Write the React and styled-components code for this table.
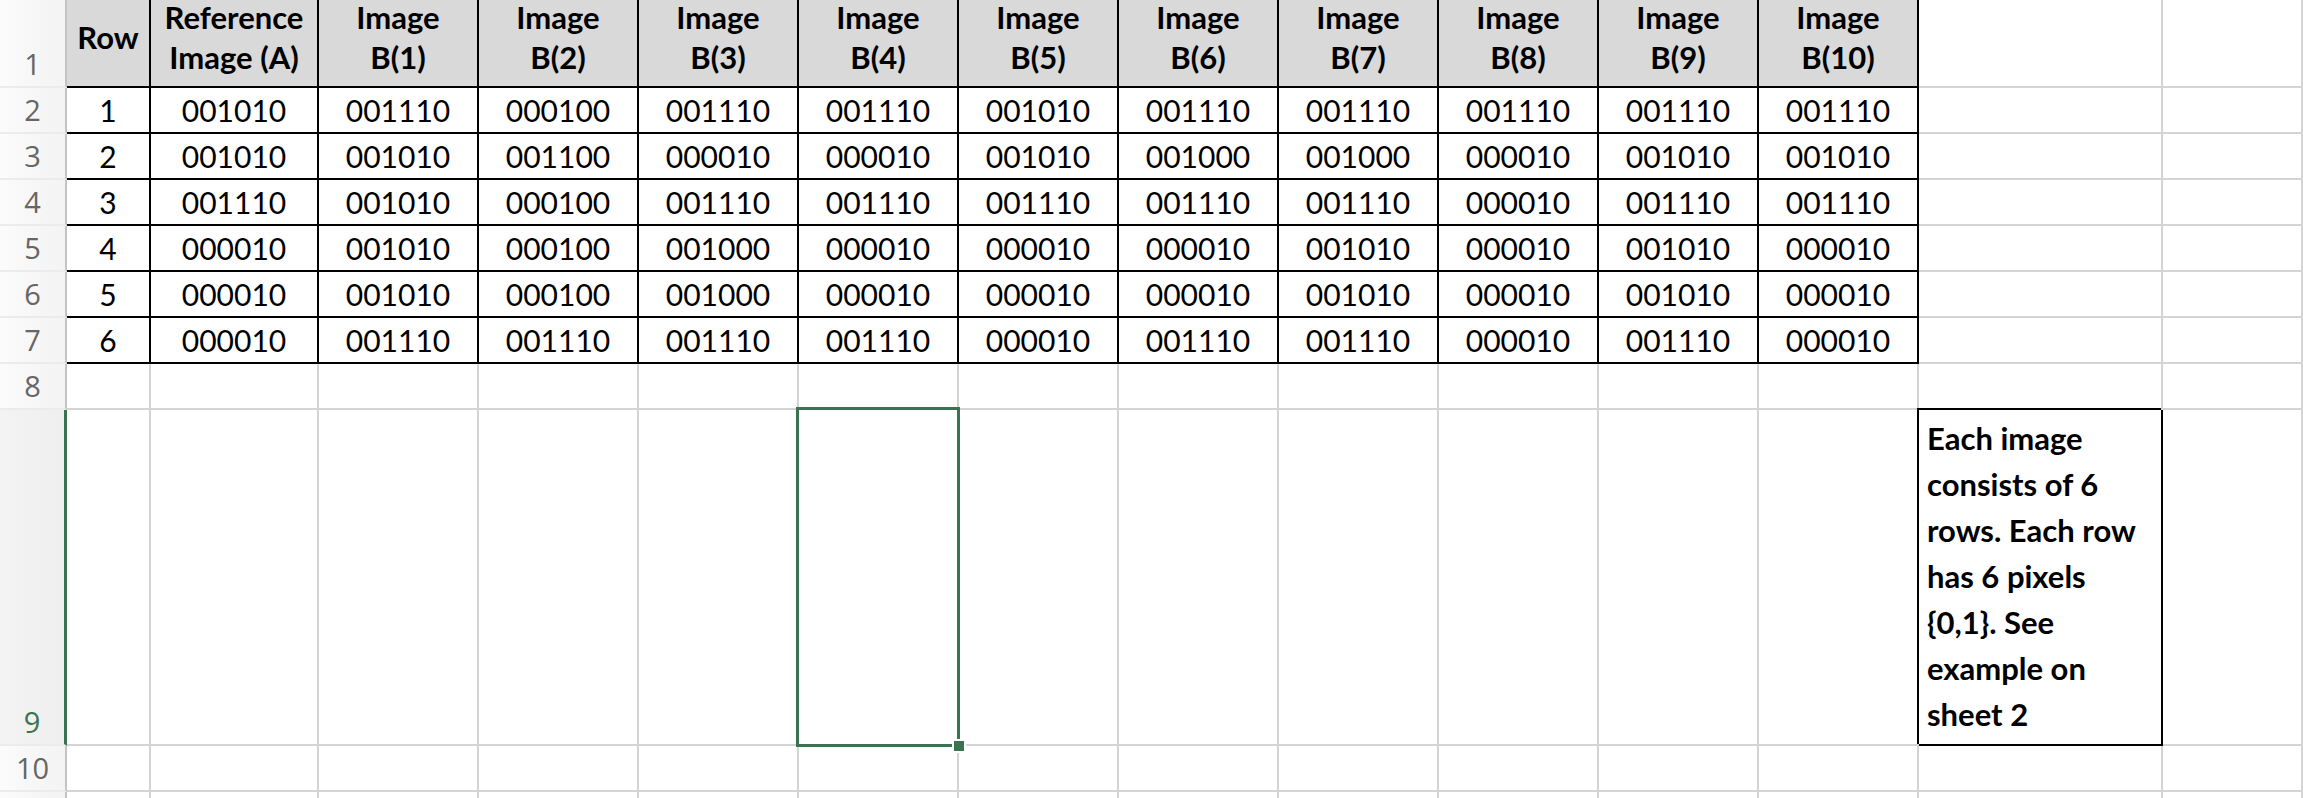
import React from 'react';
import styled, { createGlobalStyle, css } from 'styled-components';

const GlobalStyle = createGlobalStyle`
  html, body {
    margin: 0;
    padding: 0;
    background: #ffffff;
    overflow: hidden;
  }
`;

const GREEN = '#3a7350';
const GRID = '#d4d4d4';

const headers = [
  ['Row'],
  ['Reference', 'Image (A)'],
  ['Image', 'B(1)'],
  ['Image', 'B(2)'],
  ['Image', 'B(3)'],
  ['Image', 'B(4)'],
  ['Image', 'B(5)'],
  ['Image', 'B(6)'],
  ['Image', 'B(7)'],
  ['Image', 'B(8)'],
  ['Image', 'B(9)'],
  ['Image', 'B(10)'],
];

const rows = [
  ['1', '001010', '001110', '000100', '001110', '001110', '001010', '001110', '001110', '001110', '001110', '001110'],
  ['2', '001010', '001010', '001100', '000010', '000010', '001010', '001000', '001000', '000010', '001010', '001010'],
  ['3', '001110', '001010', '000100', '001110', '001110', '001110', '001110', '001110', '000010', '001110', '001110'],
  ['4', '000010', '001010', '000100', '001000', '000010', '000010', '000010', '001010', '000010', '001010', '000010'],
  ['5', '000010', '001010', '000100', '001000', '000010', '000010', '000010', '001010', '000010', '001010', '000010'],
  ['6', '000010', '001110', '001110', '001110', '001110', '000010', '001110', '001110', '000010', '001110', '000010'],
];

// wrapped the way the sheet wraps it
const noteLines = [
  'Each image',
  'consists of 6',
  'rows. Each row',
  'has 6 pixels',
  '{0,1}. See',
  'example on',
  'sheet 2',
];

const Sheet = styled.div`
  display: grid;
  grid-template-columns: 67px 84px 168px repeat(10, 160px) 244px 1fr;
  grid-template-rows: 96px repeat(7, 46px) 336px 46px 46px;
  margin-top: -8px;
  font-family: Lato, 'Liberation Sans', sans-serif;
  color: #000;
`;

const RowHead = styled.div`
  box-sizing: border-box;
  display: flex;
  align-items: flex-end;
  justify-content: center;
  padding-bottom: 4px;
  font-family: 'Open Sans', 'Liberation Sans', sans-serif;
  font-size: 29px;
  line-height: 36px;
  color: ${(p) => (p.$selected ? GREEN : '#666666')};
  background: ${(p) =>
    p.$selected
      ? 'linear-gradient(to right, #f3f3f3, #efefef)'
      : 'linear-gradient(to right, #fbfbfb, #f3f3f3)'};
  border-right: ${(p) => (p.$selected ? `3px solid ${GREEN}` : '2px solid #c4c4c4')};
  border-bottom: 2px solid #ebebeb;
`;

const Cell = styled.div`
  box-sizing: border-box;
  border-right: 2px solid ${GRID};
  border-bottom: 2px solid ${GRID};
  position: relative;

  ${(p) =>
    p.$selected &&
    css`
      &::before {
        content: '';
        position: absolute;
        left: -3px;
        top: -3px;
        right: -3px;
        bottom: -3px;
        border: 3px solid ${GREEN};
        z-index: 2;
      }
      &::after {
        content: '';
        position: absolute;
        right: -7px;
        bottom: -7px;
        width: 10px;
        height: 10px;
        background: ${GREEN};
        box-shadow: 0 0 0 2px #ffffff;
        z-index: 3;
      }
    `}
`;

const TableCell = styled.div`
  box-sizing: border-box;
  display: flex;
  flex-direction: column;
  align-items: center;
  justify-content: center;
  border-right: 2px solid #000;
  border-bottom: 2px solid #000;
  font-size: 30px;
  text-align: center;
  white-space: nowrap;
  ${(p) =>
    p.$head
      ? css`
          background: #d9d9d9;
          font-size: 31px;
          font-weight: 700;
          line-height: 40px;
          padding-bottom: 4px;
        `
      : css`
          line-height: 36px;
        `}
`;

const Note = styled.div`
  box-sizing: border-box;
  position: relative;
  z-index: 1;
  display: flex;
  flex-direction: column;
  justify-content: flex-end;
  padding: 0 8px 7px 8px;
  border-right: 2px solid #000;
  border-bottom: 2px solid #000;
  box-shadow: -2px -2px 0 #000;
  font-size: 31px;
  font-weight: 700;
  line-height: 46px;
  white-space: nowrap;
`;

const Blank = ({ n }) =>
  Array.from({ length: n }, (_, i) => <Cell key={i} />);

export default function App() {
  return (
    <>
      <GlobalStyle />
      <Sheet>
        <RowHead>1</RowHead>
        {headers.map((h, i) => (
          <TableCell $head key={i}>
            {h.map((line) => (
              <span key={line}>{line}</span>
            ))}
          </TableCell>
        ))}
        <Cell />
        <Cell />

        {rows.map((r, ri) => (
          <React.Fragment key={ri}>
            <RowHead>{ri + 2}</RowHead>
            {r.map((v, ci) => (
              <TableCell key={ci}>{v}</TableCell>
            ))}
            <Cell />
            <Cell />
          </React.Fragment>
        ))}

        <RowHead>8</RowHead>
        <Blank n={14} />

        <RowHead $selected>9</RowHead>
        <Blank n={5} />
        <Cell $selected />
        <Blank n={6} />
        <Note>
          {noteLines.map((l) => (
            <span key={l}>{l}</span>
          ))}
        </Note>
        <Cell />

        <RowHead>10</RowHead>
        <Blank n={14} />

        <RowHead />
        <Blank n={14} />
      </Sheet>
    </>
  );
}
